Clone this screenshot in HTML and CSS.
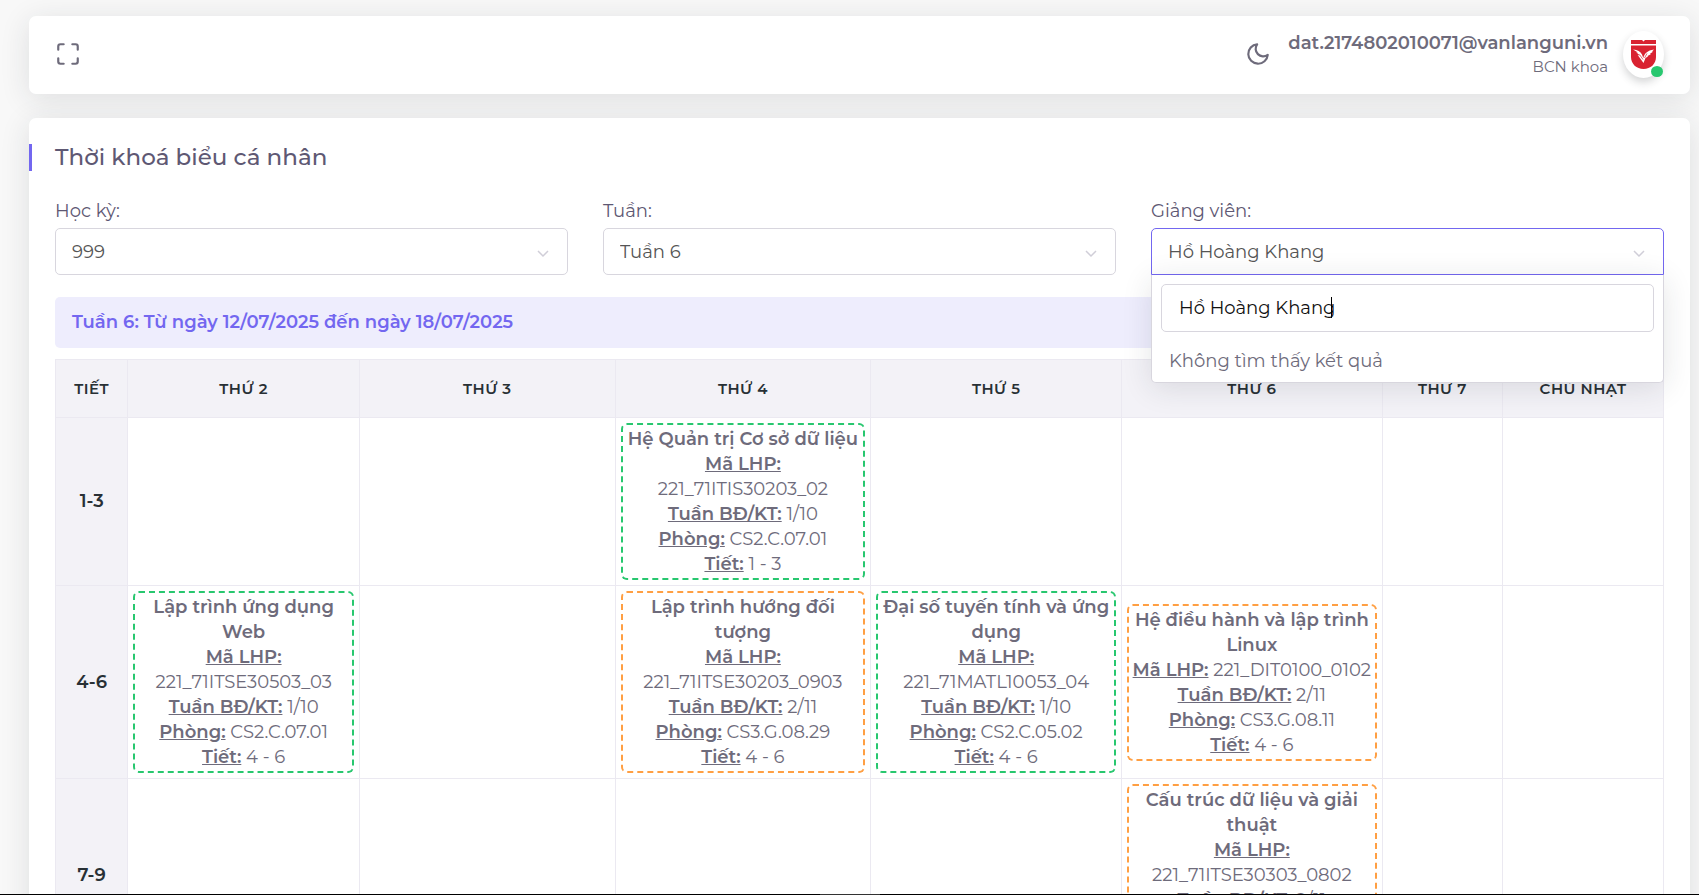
FILE: index.html
```
<!DOCTYPE html>
<html lang="vi">
<head>
<meta charset="utf-8">
<meta name="viewport" content="width=device-width, initial-scale=1">
<title>Thời khoá biểu cá nhân</title>
<link rel="stylesheet" href="styles.css">
</head>
<body>
<header class="navbar">
  <button class="icon-button" type="button" aria-label="Toàn màn hình">
    <svg class="icon" viewBox="0 0 24 24"><path d="M8 3H5a2 2 0 0 0-2 2v3m18 0V5a2 2 0 0 0-2-2h-3m0 18h3a2 2 0 0 0 2-2v-3M3 16v3a2 2 0 0 0 2 2h3"/></svg>
  </button>
  <div class="navbar-end">
    <button class="icon-button" type="button" aria-label="Chế độ tối">
      <svg class="icon" viewBox="0 0 24 24"><path d="M21 12.79A9 9 0 1 1 11.21 3 7 7 0 0 0 21 12.79z"/></svg>
    </button>
    <a class="user" href="#">
      <span class="user-info">
        <span class="user-name">dat.2174802010071@vanlanguni.vn</span>
        <span class="user-role">BCN khoa</span>
      </span>
      <span class="avatar">
        <svg class="avatar-logo" viewBox="0 0 25 29">
          <path fill="#d92231" d="M0 0h11l1.500 1.500L14 0h11v4H0zM0 5.500h25V17c0 7-5.500 12-12.500 12S0 24 0 17z"/>
          <path fill="#fff" d="M2 9.500c4.500.5 7.500 2 9 5l1.300 3.500c1-4.500 4.200-7.500 10.700-8.500l-2 2 1 .2-3 2 .8.500-3.300 1.700.5.700-2.500 1.500-2 4.900-5.800-8 2.300.5-3.800-3.200 1.700.2z"/>
          <path fill="none" stroke="#d92231" stroke-width=".7" d="M8.500 14.500l3.500 5M16 13.500l-2.500 4.500"/>
        </svg>
        <span class="avatar-status"></span>
      </span>
    </a>
  </div>
</header>

<main class="card">
  <h1 class="card-title">Thời khoá biểu cá nhân</h1>
  <form class="filters">
    <div class="field">
      <label for="term">Học kỳ:</label>
      <div class="select">
        <select id="term"><option>999</option></select>
        <svg class="chevron" viewBox="0 0 12 8"><path d="M1 1l5 5 5-5"/></svg>
      </div>
    </div>
    <div class="field">
      <label for="week">Tuần:</label>
      <div class="select">
        <select id="week"><option>Tuần 6</option></select>
        <svg class="chevron" viewBox="0 0 12 8"><path d="M1 1l5 5 5-5"/></svg>
      </div>
    </div>
    <div class="field">
      <label for="lecturer">Giảng viên:</label>
      <div class="select is-open">
        <select id="lecturer"><option>Hồ Hoàng Khang</option></select>
        <svg class="chevron" viewBox="0 0 12 8"><path d="M1 1l5 5 5-5"/></svg>
        <div class="dropdown">
          <div class="search">
            <input class="search-input" type="text" aria-label="Tìm giảng viên" value="Hồ Hoàng Khang">
            <span class="caret"></span>
          </div>
          <p class="dropdown-empty">Không tìm thấy kết quả</p>
        </div>
      </div>
    </div>
  </form>

  <p class="week-banner">Tuần 6: Từ ngày 12/07/2025 đến ngày 18/07/2025</p>

  <table class="timetable">
    <colgroup>
      <col class="col-period"><col class="col-mon"><col class="col-tue"><col class="col-wed"><col class="col-thu"><col class="col-fri"><col class="col-sat"><col class="col-sun">
    </colgroup>
    <thead>
      <tr><th scope="col">TIẾT</th><th scope="col">THỨ 2</th><th scope="col">THỨ 3</th><th scope="col">THỨ 4</th><th scope="col">THỨ 5</th><th scope="col">THỨ 6</th><th scope="col">THỨ 7</th><th scope="col">CHỦ NHẬT</th></tr>
    </thead>
    <tbody>
      <tr>
        <th scope="row">1-3</th>
        <td></td>
        <td></td>
        <td><div class="lesson theory"><b>Hệ Quản trị Cơ sở dữ liệu</b><br><b class="key">Mã LHP:</b><br>221_71ITIS30203_02<br><b class="key">Tuần BĐ/KT:</b> 1/10<br><b class="key">Phòng:</b> CS2.C.07.01<br><b class="key">Tiết:</b> 1 - 3</div></td>
        <td></td>
        <td></td>
        <td></td>
        <td></td>
      </tr>
      <tr>
        <th scope="row">4-6</th>
        <td><div class="lesson theory"><b>Lập trình ứng dụng<br>Web</b><br><b class="key">Mã LHP:</b><br>221_71ITSE30503_03<br><b class="key">Tuần BĐ/KT:</b> 1/10<br><b class="key">Phòng:</b> CS2.C.07.01<br><b class="key">Tiết:</b> 4 - 6</div></td>
        <td></td>
        <td><div class="lesson practice"><b>Lập trình hướng đối<br>tượng</b><br><b class="key">Mã LHP:</b><br>221_71ITSE30203_0903<br><b class="key">Tuần BĐ/KT:</b> 2/11<br><b class="key">Phòng:</b> CS3.G.08.29<br><b class="key">Tiết:</b> 4 - 6</div></td>
        <td><div class="lesson theory"><b>Đại số tuyến tính và ứng<br>dụng</b><br><b class="key">Mã LHP:</b><br>221_71MATL10053_04<br><b class="key">Tuần BĐ/KT:</b> 1/10<br><b class="key">Phòng:</b> CS2.C.05.02<br><b class="key">Tiết:</b> 4 - 6</div></td>
        <td><div class="lesson practice"><b>Hệ điều hành và lập trình<br>Linux</b><br><b class="key">Mã LHP:</b> 221_DIT0100_0102<br><b class="key">Tuần BĐ/KT:</b> 2/11<br><b class="key">Phòng:</b> CS3.G.08.11<br><b class="key">Tiết:</b> 4 - 6</div></td>
        <td></td>
        <td></td>
      </tr>
      <tr>
        <th scope="row">7-9</th>
        <td></td>
        <td></td>
        <td></td>
        <td></td>
        <td><div class="lesson practice"><b>Cấu trúc dữ liệu và giải<br>thuật</b><br><b class="key">Mã LHP:</b><br>221_71ITSE30303_0802<br><b class="key">Tuần BĐ/KT:</b> 2/11<br><b class="key">Phòng:</b> CS3.G.08.11<br><b class="key">Tiết:</b> 7 - 9</div></td>
        <td></td>
        <td></td>
      </tr>
    </tbody>
  </table>
</main>
<div class="bottom-edge"><span class="bottom-handle"></span></div>
</body>
</html>
```
FILE: styles.css
```
* {
  box-sizing: border-box;
}

html,
body {
  height: 100%;
  overflow: hidden;
}

body {
  margin: 0;
  padding: 16px 9px 0 29px;
  background: #f8f8f8;
  color: #6e6b7b;
  font-family: Montserrat, Inter, "Noto Sans", sans-serif;
  font-size: 18px;
  line-height: 25px;
}

button,
input,
select {
  font: inherit;
  color: inherit;
}

.navbar,
.card {
  background: #fff;
  border-radius: 7px;
  box-shadow: 0 5px 30px rgba(34, 41, 47, 0.12);
}

.navbar {
  display: flex;
  align-items: center;
  justify-content: space-between;
  height: 78px;
  margin-bottom: 24px;
  padding: 0 26px 2px;
}

.navbar-end {
  display: flex;
  align-items: center;
  gap: 17px;
}

.icon-button {
  display: flex;
  padding: 0;
  border: 0;
  background: none;
}

.icon {
  width: 26px;
  height: 26px;
  fill: none;
  stroke: #6e6b7b;
  stroke-width: 2;
  stroke-linecap: round;
  stroke-linejoin: round;
}

.user {
  display: flex;
  align-items: center;
  gap: 15px;
  color: inherit;
  text-decoration: none;
}

.user-info {
  display: flex;
  flex-direction: column;
  text-align: right;
}

.user-name {
  font-weight: 600;
}

.user-role {
  font-size: 15px;
  line-height: 21px;
}

.avatar {
  position: relative;
  display: flex;
  align-items: center;
  justify-content: center;
  width: 41px;
  height: 47px;
  border-radius: 50%;
  background: #fff;
  box-shadow: 0 4px 8px rgba(34, 41, 47, 0.2);
}

.avatar-logo {
  width: 25px;
  height: 29px;
}

.avatar-status {
  position: absolute;
  right: 1px;
  bottom: 1px;
  width: 12px;
  height: 11px;
  border-radius: 50%;
  background: #28c76f;
}

.card {
  padding: 26px 26px 30px;
}

.card-title {
  margin: 0 0 28px -26px;
  padding-left: 23px;
  border-left: 3px solid #7367f0;
  color: #5e5873;
  font-size: 23px;
  font-weight: 500;
  line-height: 27px;
}

.filters {
  display: grid;
  grid-template-columns: repeat(3, 1fr);
  gap: 35px;
  margin-bottom: 22px;
}

.field label {
  display: block;
  margin-bottom: 4px;
  color: #5e5873;
}

.select {
  position: relative;
}

.select select {
  display: block;
  width: 100%;
  height: 47px;
  padding: 2px 16px 0;
  border: 1px solid #d8d6de;
  border-radius: 5px;
  background: #fff;
  color: #555;
  appearance: none;
}

.chevron {
  position: absolute;
  top: 22px;
  right: 19px;
  width: 12px;
  height: 8px;
  fill: none;
  stroke: #d0ced8;
  stroke-width: 1.5;
}

.is-open select {
  border-color: #7367f0;
  border-radius: 5px 5px 0 0;
}

.dropdown {
  position: absolute;
  z-index: 2;
  top: 100%;
  left: 0;
  right: 0;
  padding: 9px 9px 0;
  border: 1px solid #d8d6de;
  border-top: 0;
  border-radius: 0 0 5px 5px;
  background: #fff;
  box-shadow: 0 5px 30px rgba(34, 41, 47, 0.12);
}

.search {
  position: relative;
}

.search-input {
  display: block;
  width: 100%;
  height: 48px;
  padding: 0 17px;
  border: 1px solid #d8d6de;
  border-radius: 5px;
  background: #fff;
  color: #111;
  outline: 0;
}

.caret {
  position: absolute;
  top: 13px;
  left: 170px;
  width: 1px;
  height: 21px;
  background: #000;
}

.dropdown-empty {
  margin: 9px 0 0;
  padding: 8px;
}

.week-banner {
  margin: 0 0 11px;
  padding: 13px 17px;
  border-radius: 5px;
  background: #eeedfd;
  color: #7367f0;
  font-weight: 600;
}

.timetable {
  width: 100%;
  border-collapse: collapse;
  table-layout: fixed;
  text-align: center;
}

.col-period { width: 4.5%; }
.col-mon { width: 14.4%; }
.col-tue { width: 15.9%; }
.col-wed { width: 15.9%; }
.col-thu { width: 15.6%; }
.col-fri { width: 16.2%; }
.col-sat { width: 7.5%; }
.col-sun { width: 10%; }

.timetable th,
.timetable td {
  padding: 5px;
  border: 1px solid #ebe9f1;
}

.timetable th {
  padding: 5px 0;
  background: #f3f2f7;
  color: #283035;
  font-weight: 600;
}

.timetable thead th {
  height: 58px;
  font-size: 15px;
  letter-spacing: 0.5px;
}

.lesson {
  padding: 2px 0 1px;
  border: 2px dashed;
  border-radius: 6px;
  white-space: nowrap;
}

.lesson b {
  font-weight: 600;
}

.lesson .key {
  text-decoration: underline;
}

.theory {
  border-color: #28c76f;
}

.practice {
  border-color: #ff9f43;
}

.bottom-edge {
  position: fixed;
  z-index: 3;
  right: 0;
  bottom: 0;
  left: 0;
  display: flex;
  justify-content: center;
  height: 1px;
  background: #000;
}

.bottom-handle {
  width: 60px;
  background: #333;
}
```
